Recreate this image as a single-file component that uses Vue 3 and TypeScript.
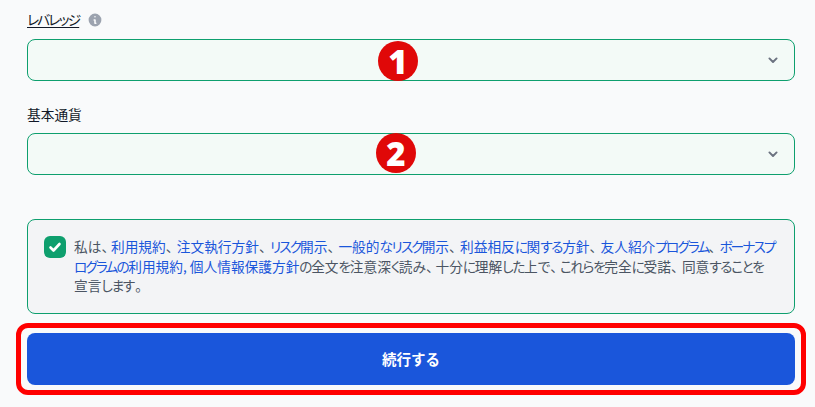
<script setup lang="ts">
interface Field {
  label: string
  badge: string
  hint: boolean
}
interface Run {
  text: string
  kind: 'hira' | 'kata' | 'comma' | 'kanji'
}
interface Segment {
  text: string
  link?: boolean
}

const kindOf = (text: string): Run['kind'] => {
  if (/^[\u3040-\u309f]/.test(text)) return 'hira'
  if (/^[\u30a0-\u30ff]/.test(text)) return 'kata'
  if (/^[、。]/.test(text)) return 'comma'
  return 'kanji'
}

const toRuns = (s: string): Run[] =>
  (s.match(/[\u3040-\u309f]+|[\u30a0-\u30ff]+|[、。]|[^\u3040-\u30ff、。]+/g) ?? []).map((text) => ({
    text,
    kind: kindOf(text),
  }))

const fields: Field[] = [
  { label: 'レバレッジ', badge: '1', hint: true },
  { label: '基本通貨', badge: '2', hint: false },
]

const lines: Segment[][] = [
  [
    { text: '私は、' },
    { text: '利用規約', link: true },
    { text: '、' },
    { text: '注文執行方針', link: true },
    { text: '、' },
    { text: 'リスク開示', link: true },
    { text: '、' },
    { text: '一般的なリスク開示', link: true },
    { text: '、' },
    { text: '利益相反に関する方針', link: true },
    { text: '、' },
    { text: '友人紹介プログラム', link: true },
    { text: '、' },
    { text: 'ボーナスプ', link: true },
  ],
  [
    { text: 'ログラムの利用規約, ', link: true },
    { text: '個人情報保護方針', link: true },
    { text: 'の全文を注意深く読み、十分に理解した上で、これらを完全に受諾、同意することを' },
  ],
  [{ text: '宣言します。' }],
]
</script>

<template>
  <main class="page">
    <section v-for="f in fields" :key="f.badge" class="field">
      <div class="label-row">
        <span class="label" :class="{ dotted: f.hint }"><span v-for="(r, i) in toRuns(f.label)" :key="i" :class="r.kind">{{ r.text }}</span></span>
        <svg v-if="f.hint" class="info" viewBox="0 0 20 20" aria-hidden="true">
          <path fill="#9ca3af" fill-rule="evenodd" d="M18 10a8 8 0 1 1-16 0 8 8 0 0 1 16 0Zm-7-4a1 1 0 1 1-2 0 1 1 0 0 1 2 0ZM9 9a1 1 0 0 0 0 2v3a1 1 0 0 0 1 1h1a1 1 0 1 0 0-2v-3a1 1 0 0 0-1-1H9Z" />
        </svg>
      </div>
      <div class="select">
        <svg class="chevron" viewBox="0 0 20 20" aria-hidden="true">
          <path fill="none" stroke="#6b7280" stroke-width="2.400" stroke-linecap="round" stroke-linejoin="round" d="m5.500 8 4.500 4.500L14.500 8" />
        </svg>
        <span class="badge" :class="'badge-' + f.badge">{{ f.badge }}</span>
      </div>
    </section>

    <section class="consent">
      <span class="check">
        <svg viewBox="0 0 22 22" aria-hidden="true">
          <path fill="none" stroke="#fff" stroke-width="2.600" stroke-linecap="round" stroke-linejoin="round" d="m6.500 11.500 3 3 6-6.500" />
        </svg>
      </span>
      <div class="copy">
        <p v-for="(line, n) in lines" :key="n" class="line">
          <template v-for="(seg, s) in line" :key="s">
            <component :is="seg.link ? 'a' : 'span'"><span v-for="(r, i) in toRuns(seg.text)" :key="i" :class="r.kind">{{ r.text }}</span></component>
          </template>
        </p>
      </div>
    </section>

    <div class="action">
      <button class="submit" type="button"><span class="submit-text">続行する</span></button>
      <span class="ring"></span>
    </div>
  </main>
</template>

<style>
html,
body {
  background: #f9fafb;
}
</style>

<style scoped>
.page {
  box-sizing: border-box;
  width: 815px;
  height: 407px;
  overflow: hidden;
  padding: 10px 20px 0 27px;
  font-family: "Noto Sans CJK JP", "Noto Sans", sans-serif;
  background: #f9fafb;
}
.kata {
  font-feature-settings: "palt";
  letter-spacing: -1.900px;
}
.hira {
  font-feature-settings: "palt";
  letter-spacing: -1.400px;
}
.comma {
  letter-spacing: -2.700px;
}
.hira + .comma {
  margin-left: 1.400px;
  letter-spacing: -4.100px;
}
.field + .field {
  margin-top: 24px;
}
.label-row {
  display: flex;
  align-items: center;
  gap: 8px;
  height: 20px;
  margin-bottom: 9px;
}
.field + .field .label-row {
  margin-bottom: 8px;
}
.label {
  padding-bottom: 2px;
  font-size: 13.700px;
  line-height: 20px;
  color: #111827;
}
.dotted {
  text-decoration: underline;
  text-underline-offset: 2px;
}
.dotted .kata {
  letter-spacing: -1.800px;
}
.info {
  width: 16px;
  height: 16px;
}
.select {
  position: relative;
  box-sizing: border-box;
  display: flex;
  align-items: center;
  justify-content: flex-end;
  height: 42px;
  padding-right: 13px;
  border: 1px solid #0e9f6e;
  border-radius: 8px;
  background: #f3faf7;
}
.chevron {
  width: 16px;
  height: 16px;
}
.badge {
  position: absolute;
  top: 1px;
  display: flex;
  align-items: center;
  justify-content: center;
  width: 40px;
  height: 40px;
  border-radius: 50%;
  background: #e00808;
  color: #fff;
  font-family: "Open Sans", sans-serif;
  font-size: 33px;
  font-weight: 800;
  line-height: 1;
}
.badge-1 {
  left: 350px;
}
.badge-2 {
  left: 348px;
  top: -1px;
}
.consent {
  box-sizing: border-box;
  display: flex;
  gap: 8px;
  height: 95px;
  margin-top: 44px;
  padding: 16px 16px 0;
  border: 1px solid #0e9f6e;
  border-radius: 8px;
  background: #f3f4f6;
}
.check {
  flex: none;
  width: 22px;
  height: 22px;
  border-radius: 6px;
  background: #0e9f6e;
}
.check svg {
  display: block;
  width: 22px;
  height: 22px;
}
.copy {
  margin-top: 1px;
  font-size: 13.700px;
  line-height: 19.500px;
  color: #4b5563;
  white-space: pre;
}
.line {
  margin: 0;
}
.copy a {
  color: #1a56db;
}
.action {
  position: relative;
  margin-top: 19px;
}
.submit {
  display: block;
  width: 100%;
  height: 52px;
  padding: 0 0 2px;
  border: 0;
  border-radius: 8px;
  background: #1a56db;
  color: #fff;
  font-family: inherit;
  font-size: 14.500px;
  font-weight: 700;
}
.ring {
  position: absolute;
  inset: -10px -11px;
  border: 5px solid #ff0000;
  border-radius: 12px;
  pointer-events: none;
}
</style>
